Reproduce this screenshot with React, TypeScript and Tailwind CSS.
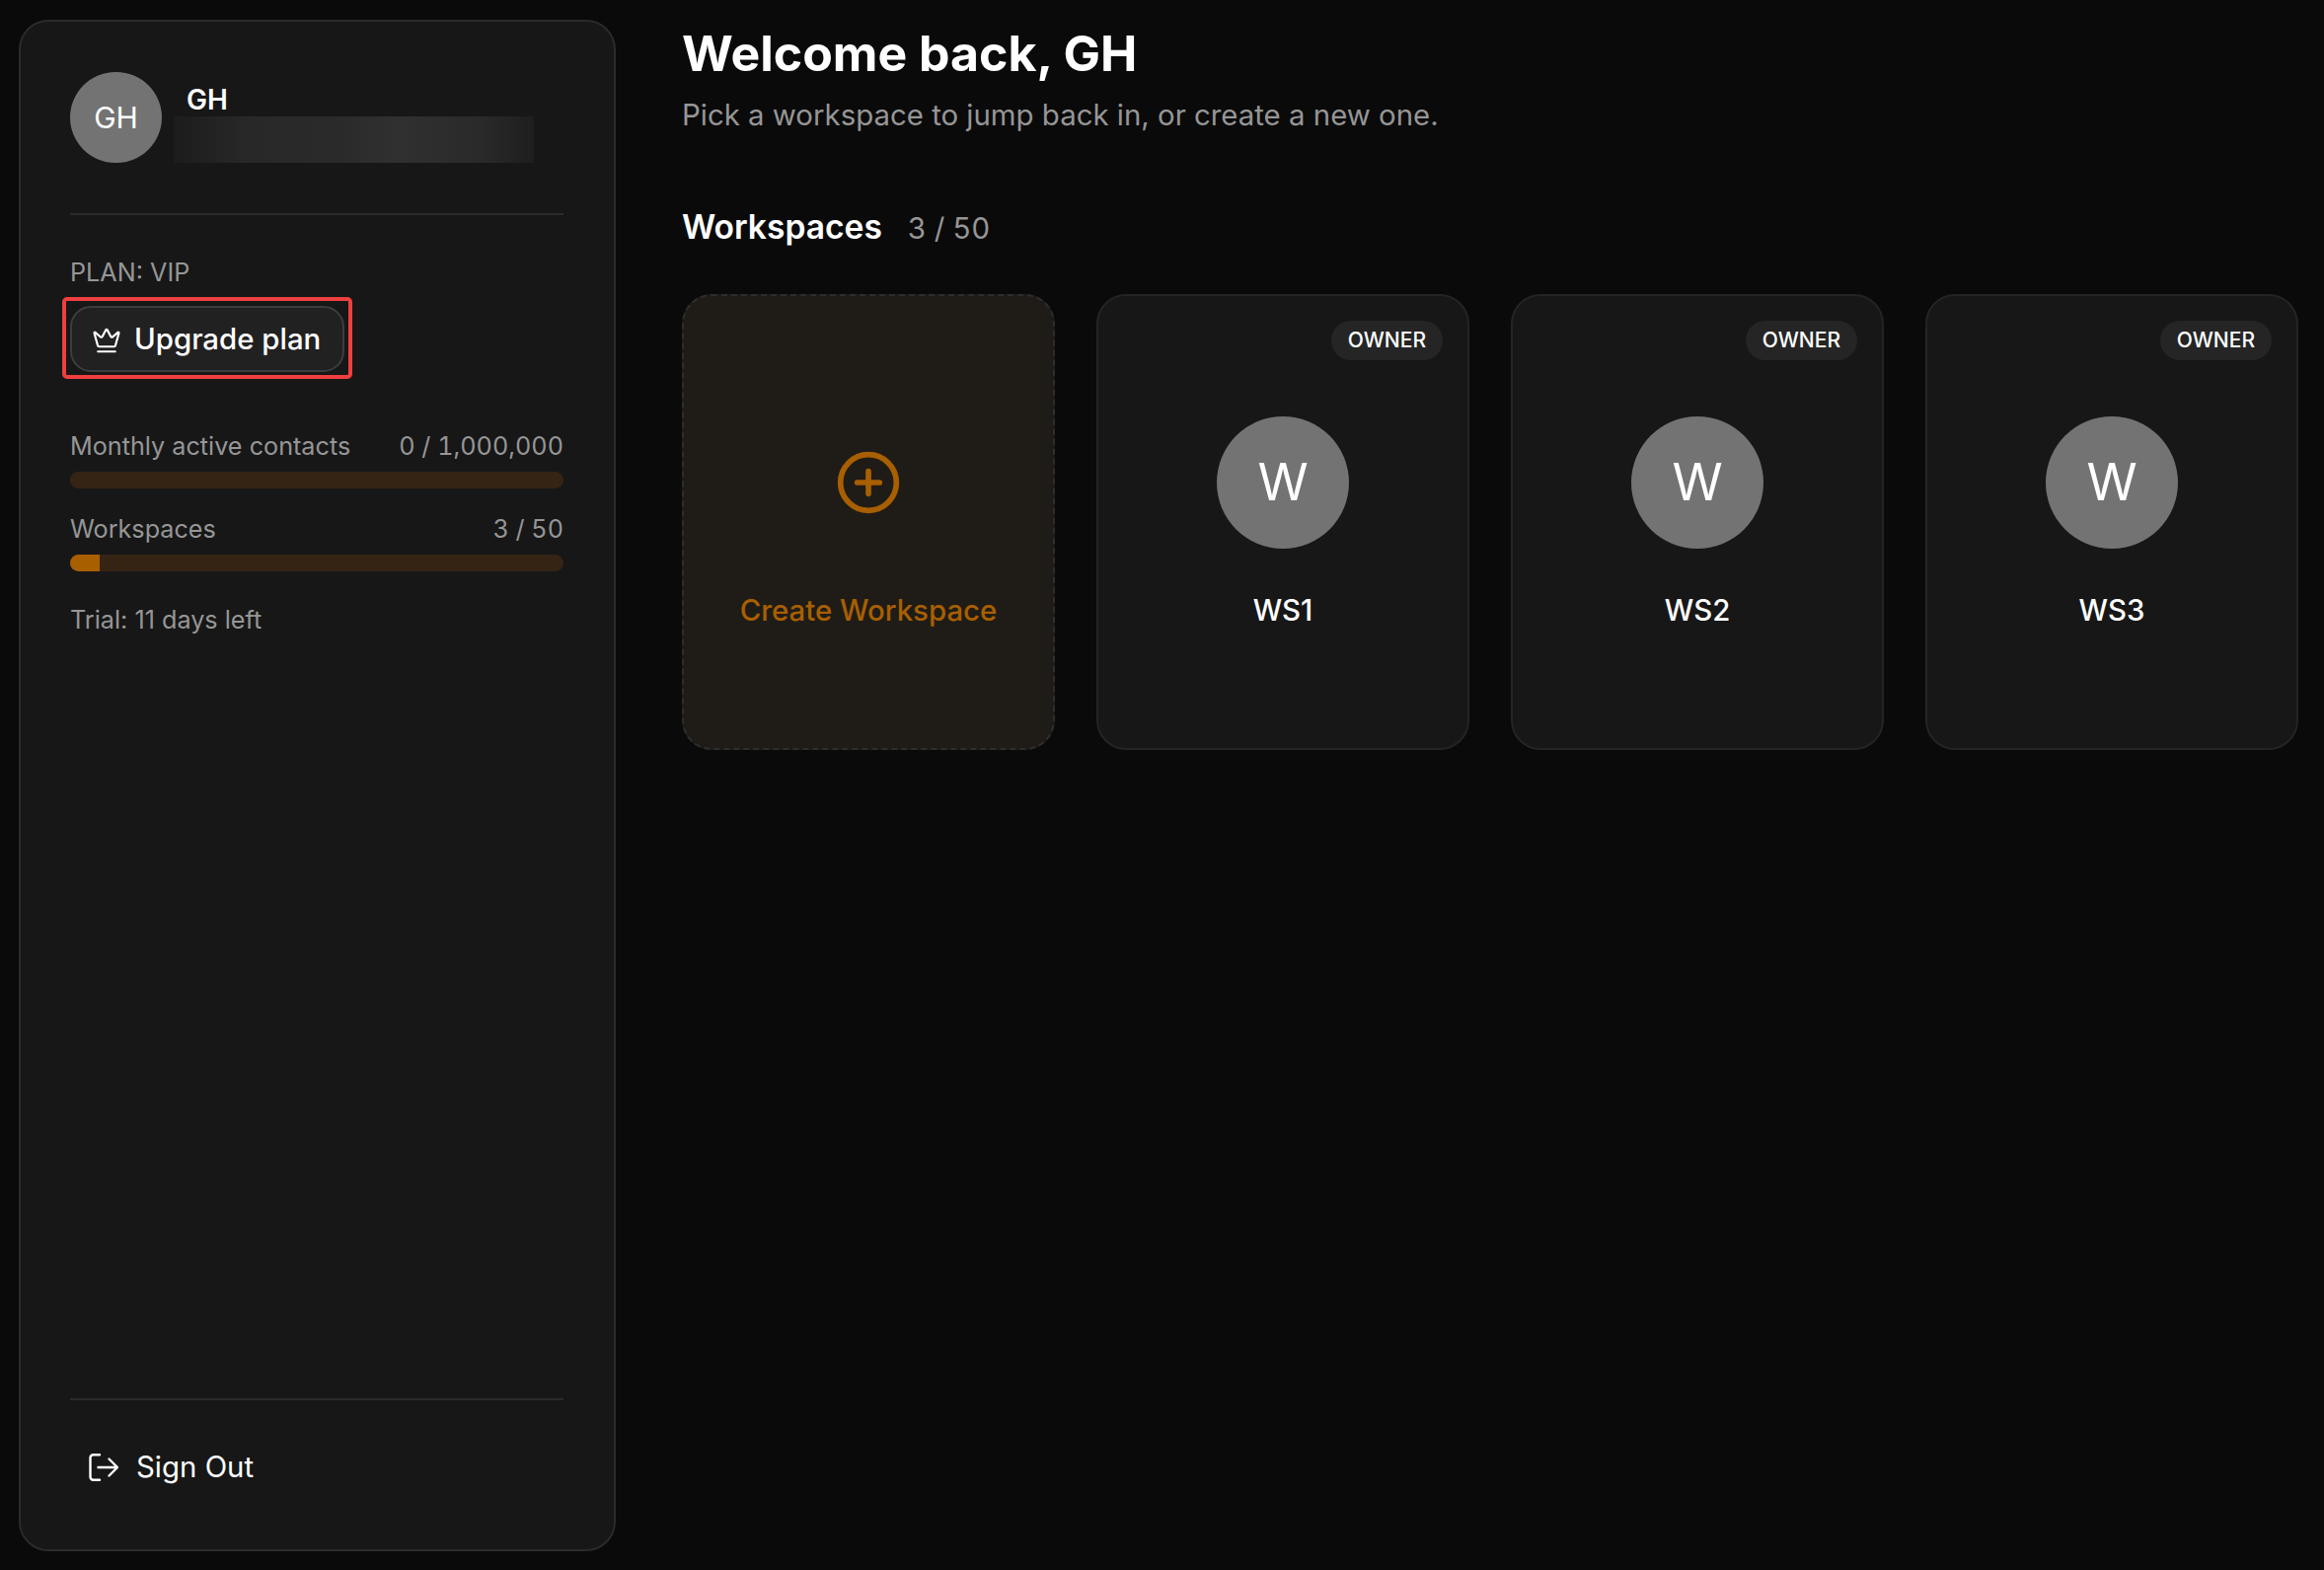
import React, { FC } from "react";
import { Crown, CirclePlus } from "lucide-react";

const workspaces = ["WS1", "WS2", "WS3"];

const UsageRow: FC<{ label: string; value: string; percent: number }> = ({ label, value, percent }) => (
  <div className="flex flex-col gap-[9px]">
    <div className="flex justify-between text-[25.2px] leading-[34px] text-[#969696]">
      <span>{label}</span>
      <span className="tabular-nums">{value}</span>
    </div>
    <div className="h-[17px] rounded-full bg-[#352414] overflow-hidden">
      <div className="h-full bg-[#a85f00]" style={{ width: `${percent}%` }} />
    </div>
  </div>
);

const WorkspaceCard: FC<{ name: string }> = ({ name }) => (
  <div className="relative h-[462px] pt-[1px] rounded-[30px] border-2 border-[#242424] bg-[#171717] flex flex-col items-center justify-center">
    <span className="absolute top-[25px] right-[25px] h-[40px] px-[17px] rounded-full bg-[#252525] text-white text-[21px] font-medium flex items-center">OWNER</span>
    <div className="w-[134px] h-[134px] rounded-full bg-[#737373] text-white text-[52px] flex items-center justify-center">W</div>
    <div className="mt-[45px] text-white text-[29.4px] leading-[36px] font-medium">{name}</div>
  </div>
);

const App: FC = () => {
  return (
    <div className="h-screen flex bg-[#0a0a0a] font-['Inter',sans-serif] overflow-hidden">
      <aside className="w-[605px] shrink-0 mt-[20px] mb-[19px] ml-[19px] rounded-[30px] border-2 border-[#2b2b2b] bg-[#171717] pl-[50px] pr-[51px] pt-[51px] pb-[51px] flex flex-col">
        <div className="flex items-stretch gap-[12px] pb-[51px] border-b-2 border-[#2b2b2b]">
          <div className="w-[93px] h-[92px] rounded-full bg-[#737373] text-white text-[30px] flex items-center justify-center">GH</div>
          <div className="flex flex-col justify-end">
            <div className="ml-[13px] text-white text-[28px] leading-[34px] font-semibold">GH</div>
            <div className="w-[365px] h-[47px] bg-[linear-gradient(90deg,#1c1c1c,#282828_20%,#2a2a2a_45%,#303030_62%,#2a2a2a_85%,#1e1e1e)]" />
          </div>
        </div>

        <div className="mt-[41px] text-[25.2px] leading-[34px] text-[#969696]">PLAN: VIP</div>
        <div className="mt-[8px] -ml-[8px] w-fit rounded-[5px] border-4 border-[#ef3f3f] pt-[5px] pb-[3px] px-[4px]">
          <button className="h-[67px] pt-[2px] pl-[20px] pr-[22px] rounded-[21px] border-2 border-[#3d3d3d] bg-[#212121] text-white text-[29.4px] font-medium flex items-center gap-[13px]">
            <Crown size={30} strokeWidth={1.75} />
            Upgrade plan
          </button>
        </div>

        <div className="mt-[51px] flex flex-col gap-[24px]">
          <UsageRow label="Monthly active contacts" value="0 / 1,000,000" percent={0} />
          <UsageRow label="Workspaces" value="3 / 50" percent={6} />
        </div>
        <div className="mt-[32px] text-[25.2px] leading-[34px] text-[#969696]">Trial: 11 days left</div>

        <div className="mt-auto border-t-2 border-[#2b2b2b] pt-[50px] pb-[14px] pl-[19px] flex items-center gap-[18px] text-white text-[29.4px] leading-[36px]">
          <svg width="30" height="28" viewBox="0 0 30 28" fill="none" stroke="currentColor" strokeWidth="2.4" strokeLinecap="round" strokeLinejoin="round">
            <path d="M11 1.2H4.5a3 3 0 0 0-3 3v19.6a3 3 0 0 0 3 3H11" />
            <path d="M9.5 14H29M20.5 5.5L29 14l-8.5 8.5" />
          </svg>
          Sign Out
        </div>
      </aside>

      <main className="flex-1 min-w-0 pl-[67px] pr-[26px] pt-[21px]">
        <h1 className="text-white text-[50px] leading-[66px] font-bold">Welcome back, GH</h1>
        <p className="mt-[10px] text-[#969696] text-[29.4px] leading-[40px]">Pick a workspace to jump back in, or create a new one.</p>

        <div className="mt-[70px] flex items-baseline gap-[26px]">
          <h2 className="text-white text-[33.6px] leading-[46px] font-semibold">Workspaces</h2>
          <span className="text-[#969696] text-[29.4px] tabular-nums">3 / 50</span>
        </div>

        <div className="mt-[44px] grid grid-cols-4 gap-[42px]">
          <div className="h-[462px] pt-[1px] rounded-[30px] border-2 border-dashed border-[#2e2e2e] bg-[#1f1c17] flex flex-col items-center justify-center">
            <div className="h-[134px] flex items-center justify-center text-[#a85f00]">
              <CirclePlus size={68} strokeWidth={2} />
            </div>
            <div className="mt-[45px] text-[#a85f00] text-[29.4px] leading-[36px] font-medium">Create Workspace</div>
          </div>
          {workspaces.map((w) => (
            <WorkspaceCard key={w} name={w} />
          ))}
        </div>
      </main>
    </div>
  );
};

export default App;
